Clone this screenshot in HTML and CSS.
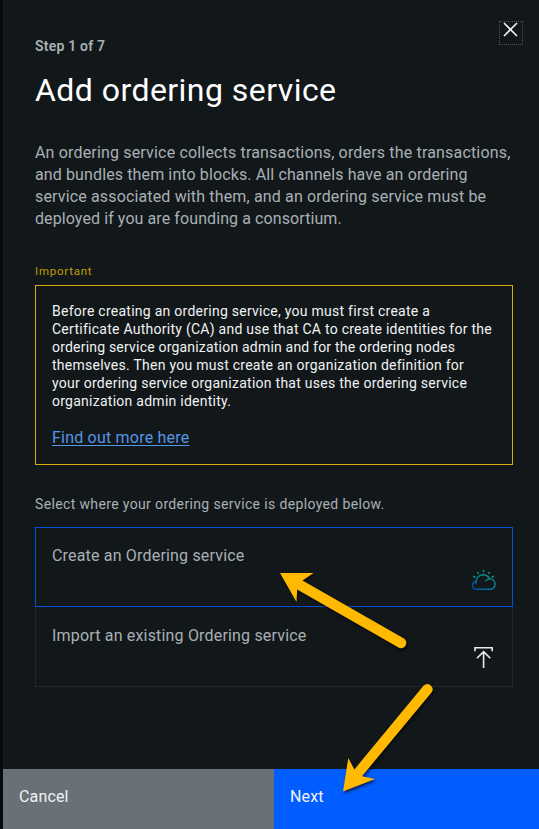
FILE: index.html
```html
<!DOCTYPE html>
<html lang="en">
<head>
<meta charset="utf-8">
<title>Add ordering service</title>
<link rel="stylesheet" href="styles.css">
</head>
<body>
<main class="panel">
  <button class="close" aria-label="Close">
    <svg width="24" height="24" viewBox="0 0 24 24"><path d="M5 2L18 15M18 2L5 15"/></svg>
  </button>
  <div class="content">
    <p class="step">Step 1 of 7</p>
    <h1 class="title"><span>Add ordering service</span></h1>
    <p class="description"><span class="d1">An ordering service collects transactions, orders the transactions,</span><br><span class="d2">and bundles them into blocks. All channels have an ordering</span><br><span class="d3">service associated with them, and an ordering service must be</span><br><span class="d4">deployed if you are founding a consortium.</span></p>
    <p class="label">Important</p>
    <section class="notice">
      <p class="notice-text"><span class="n1">Before creating an ordering service, you must first create a</span><br><span class="n2">Certificate Authority (CA) and use that CA to create identities for the</span><br><span class="n3">ordering service organization admin and for the ordering nodes</span><br><span class="n4">themselves. Then you must create an organization definition for</span><br><span class="n5">your ordering service organization that uses the ordering service</span><br><span class="n6">organization admin identity.</span></p>
      <a class="link" href="#">Find out more here</a>
    </section>
    <p class="prompt">Select where your ordering service is deployed below.</p>
    <div class="options">
      <div class="option selected">
        <span class="o1">Create an Ordering service</span>
        <svg class="icon" width="26" height="24" viewBox="0 0 26 24">
          <defs><linearGradient id="cloud" gradientUnits="userSpaceOnUse" x1="4" y1="22" x2="19" y2="3"><stop offset="0" stop-color="#0548b5"/><stop offset=".5" stop-color="#047f9c"/><stop offset="1" stop-color="#0ca678"/></linearGradient></defs>
          <g fill="none" stroke="url(#cloud)" stroke-width="1.35" stroke-linecap="round"><path d="M5.1 13.3C2.8 13.8 1.5 15.3 1.5 17.3C1.5 19.6 3.2 21.2 5.5 21.2H19.1C22.1 21.2 24 19.2 24 16.1C24 13.2 22 10.9 19.2 10.9C17.2 10.9 15.7 11.5 14.7 13"/><path d="M4.9 15.7C4.5 10.2 7.8 6.7 12 6.7C15.1 6.7 17.3 8.1 18.5 10.8"/></g>
          <path d="M2.1 8L4.4 9.5M6.4 3.8L7.6 6M12.5 1.8V4.3M18.6 3.8L17.4 6M23 8L20.7 9.5" fill="none" stroke="#078f80" stroke-width="1.5"/>
        </svg>
      </div>
      <div class="option">
        <span class="o2">Import an existing Ordering service</span>
        <svg class="icon upload" width="26" height="24" viewBox="0 0 26 24"><path d="M4 5.2V1.7H21.2V5.2M12.6 22V6M5.9 12.3L12.6 5.6L19.3 12.3"/></svg>
      </div>
    </div>
  </div>
  <footer class="actions">
    <button class="action cancel">Cancel</button>
    <button class="action next">Next</button>
  </footer>
</main>
<svg class="arrows" width="539" height="829" viewBox="0 0 539 829" aria-hidden="true">
  <path d="M280 573L313.5 573L302.5 580.5L403.5 638.2A5.3 5.3 0 0 1 398.5 647.6L297.2 589.5L296.5 602Z"/>
  <path d="M343 791.5L348.3 758L354.4 769.4L423.7 685.5A5.3 5.3 0 0 1 431.7 692.3L362 776.2L375 779Z"/>
</svg>
</body>
</html>
```
FILE: styles.css
```css
* { box-sizing: border-box; }
body {
  margin: 0;
  background: #070b0d;
  font-family: Roboto, "Liberation Sans", sans-serif;
  color: #a9b0b5;
}
p, h1 { margin: 0; white-space: nowrap; }
button { border: 0; padding: 0; font: inherit; text-align: left; }
.panel {
  position: relative;
  display: flex;
  flex-direction: column;
  height: 829px;
  margin-left: 3px;
  background: #12181a;
}
.close {
  position: absolute;
  top: 21px;
  right: 16px;
  width: 24px;
  height: 24px;
  background: none;
  border: 1px dotted #4b5052;
}
.close svg { display: block; margin: -1px; fill: none; stroke: #f0f2f2; stroke-width: 1.6; }
.content { flex: 1; padding: 37px 26px 0 32px; }
.step { font-size: 14px; line-height: 18px; font-weight: 600; letter-spacing: .2px; }
.title { margin-top: 15px; font-size: 32px; line-height: 40px; font-weight: 400; letter-spacing: .45px; color: #fff; }
.description { margin-top: 32px; font-size: 16px; line-height: 22px; }
.d1 { letter-spacing: .17px; }
.d2 { letter-spacing: .12px; }
.d3 { letter-spacing: .15px; }
.d4 { letter-spacing: .09px; }
.label { margin-top: 33px; font-size: 11.5px; line-height: 16px; letter-spacing: .75px; color: #c19c00; }
.notice { height: 180px; margin-top: 6px; padding: 16px; border: 1px solid #d8ad08; }
.notice-text { font-size: 14px; line-height: 18px; letter-spacing: .26px; color: #f0f2f2; }
.n3 { letter-spacing: .2px; }
.link { display: inline-block; margin-top: 17px; font-size: 16px; line-height: 22px; letter-spacing: .21px; color: #5596e6; text-underline-offset: 2px; }
.prompt { margin-top: 30px; font-size: 14px; line-height: 18px; letter-spacing: .36px; }
.options { margin-top: 14px; }
.option { display: flex; justify-content: space-between; height: 80px; padding: 18px 15px 0 16px; border: 1px solid #22282b; border-top: 0; font-size: 16px; line-height: 22px; letter-spacing: .18px; }
.option.selected { padding-top: 17px; border: 1px solid #0550d8; }
.icon { align-self: flex-end; margin-bottom: 14px; }
.upload { margin-bottom: 16px; fill: none; stroke: #e7eaeb; stroke-width: 1.6; }
.actions { display: flex; height: 60px; }
.action { display: flex; padding: 17px 16px; font-size: 16px; line-height: 22px; letter-spacing: .15px; color: #f0f3f5; }
.cancel { width: 271px; background: #697077; }
.next { flex: 1; background: #005dff; }
.arrows { position: absolute; left: 0; top: 0; pointer-events: none; fill: #ffb900; filter: drop-shadow(1px 2px 1.5px rgba(0, 0, 0, .65)); }
```
